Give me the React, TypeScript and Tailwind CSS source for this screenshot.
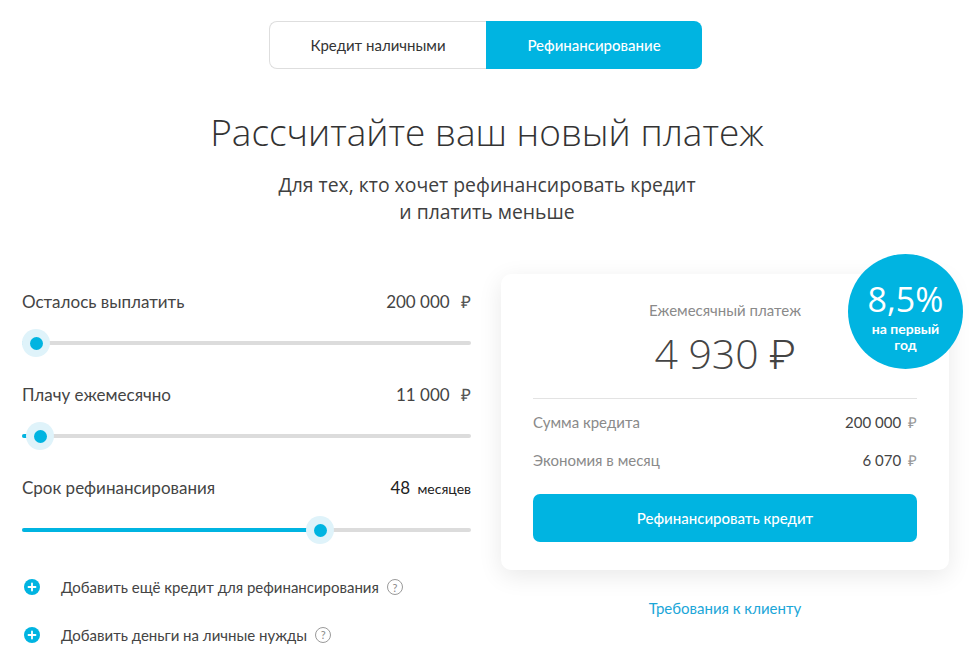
import React from "react";

function Slider({ pct }: { pct: number }) {
  return (
    <div className="relative h-[28px] w-full flex items-center">
      <div className="h-[4px] w-full rounded-full bg-[#dcdcdc]" />
      <div
        className="absolute left-0 h-[4px] rounded-full bg-[#00b4e1]"
        style={{ width: `${pct}px` }}
      />
      <div
        className="absolute top-0 w-[28px] h-[28px] -ml-[14px] rounded-full bg-[#dff3fa] flex items-center justify-center"
        style={{ left: `${pct}px` }}
      >
        <div className="w-[13px] h-[13px] rounded-full bg-[#00b4e1]" />
      </div>
    </div>
  );
}

function PlusIcon() {
  return (
    <svg width="16" height="16" viewBox="0 0 16 16">
      <circle cx="8" cy="8" r="8" fill="#00b4e1" />
      <path d="M8 4.5v7M4.5 8h7" stroke="#fff" strokeWidth="1.8" strokeLinecap="round" />
    </svg>
  );
}

function QIcon() {
  return (
    <span className="inline-flex items-center justify-center w-[16px] h-[16px] rounded-full border border-[#9a9a9a] text-[11px] leading-none text-[#8a8a8a]">
      ?
    </span>
  );
}

export default function App() {
  return (
    <div
      className="w-[974px] h-[657px] bg-white overflow-hidden text-[#404040]"
      style={{ fontFamily: "Lato, 'Open Sans', sans-serif" }}
    >
      {/* Tabs */}
      <div className="pt-[21px] flex justify-center">
        <div className="flex w-[433px] h-[48px] mr-[3px]">
          <div className="w-[217px] h-full border border-r-0 border-[#dedede] rounded-l-[8px] flex items-center justify-center text-[15px] text-[#333]">
            Кредит наличными
          </div>
          <div className="w-[216px] h-full rounded-r-[8px] bg-[#00b4e1] flex items-center justify-center text-[15px] text-white font-medium">
            Рефинансирование
          </div>
        </div>
      </div>

      {/* Title */}
      <h1
        className="mt-[39px] text-center text-[37px] leading-[48px] font-light text-[#333]"
        style={{ fontFamily: "'Open Sans', sans-serif" }}
      >
        Рассчитайте ваш новый платеж
      </h1>
      <p
        className="mt-[15px] text-center text-[19.4px] leading-[27px] text-[#404040]"
        style={{ fontFamily: "'Open Sans', sans-serif" }}
      >
        Для тех, кто хочет рефинансировать кредит
        <br />
        и платить меньше
      </p>

      {/* Main */}
      <div className="mt-[49px] flex pl-[22px] gap-[30px]">
        {/* Left column */}
        <div className="w-[449px] pt-[18px]">
          <div className="flex justify-between text-[17px] leading-[20px] text-[#444]">
            <span>Осталось выплатить</span>
            <span>
              200 000 <span className="ml-[7px] text-[#555]">₽</span>
            </span>
          </div>
          <div className="mt-[17px]">
            <Slider pct={14} />
          </div>

          <div className="mt-[28px] flex justify-between text-[17px] leading-[20px] text-[#444]">
            <span>Плачу ежемесячно</span>
            <span>
              11 000 <span className="ml-[7px] text-[#555]">₽</span>
            </span>
          </div>
          <div className="mt-[17px]">
            <Slider pct={18} />
          </div>

          <div className="mt-[28px] flex justify-between text-[17px] leading-[20px] text-[#444]">
            <span>Срок рефинансирования</span>
            <span className="text-[#222]">
              48 <span className="ml-[3px] text-[14px]">месяцев</span>
            </span>
          </div>
          <div className="mt-[17px]">
            <Slider pct={298} />
          </div>

          <div className="mt-[32px] flex items-center text-[15px] text-[#444]">
            <div className="w-[39px] pl-[2px]">
              <PlusIcon />
            </div>
            <span>Добавить ещё кредит для рефинансирования</span>
            <span className="ml-[8px] flex">
              <QIcon />
            </span>
          </div>
          <div className="mt-[25px] flex items-center text-[15px] text-[#444]">
            <div className="w-[39px] pl-[2px]">
              <PlusIcon />
            </div>
            <span>Добавить деньги на личные нужды</span>
            <span className="ml-[8px] flex">
              <QIcon />
            </span>
          </div>
        </div>

        {/* Right column */}
        <div className="w-[448px] flex flex-col items-center">
          <div className="relative w-full rounded-[10px] bg-white shadow-[0_6px_24px_rgba(0,0,0,0.09)] px-[32px] pt-[27px] pb-[28px]">
            <div className="absolute -right-[14px] -top-[20px] w-[115px] h-[115px] rounded-full bg-[#00b4e1] flex flex-col items-center pt-[28px] text-white">
              <div
                className="text-[34px] leading-[34px] font-normal"
                style={{ fontFamily: "'Open Sans', sans-serif" }}
              >
                8,5%
              </div>
              <div className="text-[14px] leading-[16px] font-bold mt-[5px] text-center">
                на первый
                <br />
                год
              </div>
            </div>

            <div className="text-center text-[15px] leading-[18px] text-[#8a8a8a]">
              Ежемесячный платеж
            </div>
            <div
              className="mt-[9px] text-center text-[41px] leading-[50px] font-light text-[#444]"
              style={{ fontFamily: "'Open Sans', Roboto, sans-serif" }}
            >
              4 930 ₽
            </div>
            <div className="mt-[20px] h-px bg-[#e3e3e3]" />
            <div className="mt-[14px] flex justify-between text-[15px] leading-[18px]">
              <span className="text-[#8a8a8a]">Сумма кредита</span>
              <span className="text-[#444]">
                200 000 <span className="ml-[3px] text-[#999]">₽</span>
              </span>
            </div>
            <div className="mt-[20px] flex justify-between text-[15px] leading-[18px]">
              <span className="text-[#8a8a8a]">Экономия в месяц</span>
              <span className="text-[#444]">
                6 070 <span className="ml-[3px] text-[#999]">₽</span>
              </span>
            </div>
            <button className="mt-[25px] w-full h-[48px] rounded-[7px] bg-[#00b4e1] text-white text-[15px] font-medium flex items-center justify-center">
              Рефинансировать кредит
            </button>
          </div>
          <a className="mt-[27px] text-[15px] text-[#1ba6d8]">Требования к клиенту</a>
        </div>
      </div>
    </div>
  );
}
